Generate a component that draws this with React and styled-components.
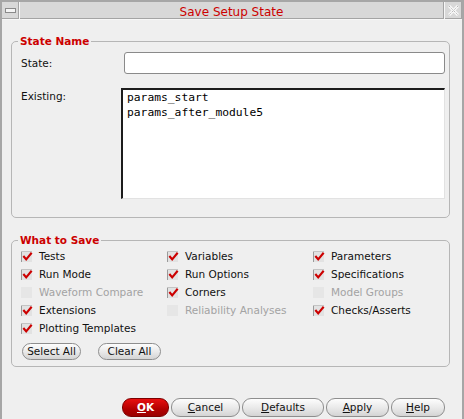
import React from 'react';
import styled, { createGlobalStyle } from 'styled-components';

const Global = createGlobalStyle`
  html, body { margin: 0; padding: 0; background: #efefef; }
  body { font-family: "DejaVu Sans", "Noto Sans", sans-serif; font-size: 10.5px; color: #111; }
  * { box-sizing: border-box; }
`;

const Window = styled.div`
  width: 464px;
  height: 419px;
  border: 2px solid #a6a6a6;
  border-bottom: none;
  background: #efefef;
  display: flex;
  flex-direction: column;
  overflow: hidden;
`;

const TitleBar = styled.div`
  display: flex;
  height: 18px;
  gap: 1px;
  background: #f7f7f7;
  flex: none;
`;

const TitleBox = styled.div`
  width: 17px;
  height: 17px;
  background: #d8d8d8;
  border-right: 1px solid #a4a4a4;
  border-bottom: 1px solid #a4a4a4;
  display: flex;
  align-items: center;
  justify-content: center;
  flex: none;
`;

const Title = styled.div`
  flex: 1;
  height: 17px;
  background: #d8d8d8;
  border-right: 1px solid #a4a4a4;
  border-bottom: 1px solid #a4a4a4;
  color: #cc0000;
  font-size: 12px;
  line-height: 16px;
  padding-top: 2px;
  text-align: center;
`;

const Content = styled.div`
  flex: 1;
  display: flex;
  flex-direction: column;
  padding: 15px 12px 2px 9px;
`;

const Frame = styled.fieldset`
  margin: ${p => p.$mt || 0}px 0 0 0;
  border: 1px solid #b6b6b6;
  border-radius: 5px;
  padding: ${p => p.$pt || 0}px 4px ${p => p.$pb || 0}px 9px;
  min-width: 0;
`;

const Legend = styled.legend`
  color: #cc0000;
  font-weight: bold;
  font-size: 10.5px;
  line-height: 13px;
  padding: 0 2px;
  margin-left: -3px;
`;

const FieldRow = styled.div`
  display: grid;
  grid-template-columns: 100px 1fr;
  align-items: ${p => p.$top ? 'start' : 'center'};
  margin-top: ${p => p.$mt || 0}px;
`;

const Label = styled.div`
  line-height: 15px;
  padding-top: ${p => p.$pt || 0}px;
`;

const TextInput = styled.input`
  margin-left: 3px;
  height: 22px;
  border: 1px solid #8a8a8a;
  border-radius: 3px;
  background: #fff;
  outline: none;
  font: inherit;
  padding: 0 4px;
`;

const List = styled.div`
  height: 111px;
  background: #fff;
  border-top: 2px solid #1c1c1c;
  border-left: 2px solid #1c1c1c;
  border-right: 1px solid #e2e2e2;
  border-bottom: 1px solid #e2e2e2;
  padding: 0 4px;
  font-family: "DejaVu Sans Mono", "Liberation Mono", monospace;
  font-size: 11.3px;
  line-height: 15px;
  color: #000;
`;

const ListItem = styled.div`
  white-space: nowrap;
`;

const CheckGrid = styled.div`
  display: grid;
  grid-template-columns: 146px 146px 1fr;
  grid-auto-rows: 18px;
`;

const CheckItem = styled.div`
  display: flex;
  align-items: center;
  gap: 6px;
  color: ${p => p.$disabled ? '#a3a3a3' : '#111'};
  white-space: nowrap;
`;

const SmallButtons = styled.div`
  display: flex;
  gap: 17px;
  margin-top: 6px;
  padding-left: 1px;
`;

const PillButton = styled.button`
  width: ${p => p.$w}px;
  height: ${p => p.$h || 17}px;
  border: 1px solid ${p => p.$primary ? '#7c0000' : '#8e8e8e'};
  border-radius: 9px;
  background: ${p => p.$primary
    ? 'linear-gradient(#e81010, #b20000 60%, #9a0000)'
    : 'linear-gradient(#fdfdfd, #e8e8e8 55%, #d4d4d4)'};
  color: ${p => p.$primary ? '#fff' : '#111'};
  font-family: "DejaVu Sans", sans-serif;
  font-size: 10.5px;
  font-weight: ${p => p.$primary ? 'bold' : 'normal'};
  padding: 0;
  line-height: 1;
  display: flex;
  align-items: center;
  justify-content: center;
  cursor: default;
`;

const ButtonBar = styled.div`
  margin-top: auto;
  display: flex;
  justify-content: flex-end;
  gap: 2px;
  padding-right: 5px;
`;

const MinIcon = () => (
  <svg width="11" height="5" viewBox="0 0 11 5">
    <rect x="0.5" y="0.5" width="10" height="4" fill="#f4f4f4" stroke="#8a8a8a" />
  </svg>
);

const CloseIcon = () => (
  <svg width="11" height="11" viewBox="0 0 11 11">
    <path d="M1 1 L10 10 M10 1 L1 10" stroke="#f8f8f8" strokeWidth="3" />
    <path d="M1 1 L10 10 M10 1 L1 10" stroke="#b4b4b4" strokeWidth="1" strokeDasharray="1.4 1" />
  </svg>
);

const CheckBox = ({ checked, disabled }) => (
  <svg width="12" height="11" viewBox="0 0 12 11" style={{ flex: 'none' }}>
    <rect x="0" y="0" width="11" height="11" fill={disabled ? '#e6e6e6' : '#e2e2e2'} />
    {!disabled && <rect x="0" y="0" width="1" height="11" fill="#9a9a9a" />}
    {!disabled && <rect x="0" y="0" width="11" height="1" fill="#c4c4c4" />}
    {checked && (
      <path d="M3 5.8 L5.2 8.4 L10 2.6" fill="none" stroke="#cc0000" strokeWidth="2.1" strokeLinecap="square" />
    )}
  </svg>
);

const Check = ({ label, checked, disabled }) => (
  <CheckItem $disabled={disabled}>
    <CheckBox checked={checked} disabled={disabled} />
    <span>{label}</span>
  </CheckItem>
);

const items = [
  ['Tests', true, false], ['Variables', true, false], ['Parameters', true, false],
  ['Run Mode', true, false], ['Run Options', true, false], ['Specifications', true, false],
  ['Waveform Compare', false, true], ['Corners', true, false], ['Model Groups', false, true],
  ['Extensions', true, false], ['Reliability Analyses', false, true], ['Checks/Asserts', true, false],
  ['Plotting Templates', true, false],
];

export default function App() {
  return (
    <>
      <Global />
      <Window>
        <TitleBar>
          <TitleBox><MinIcon /></TitleBox>
          <Title>Save Setup State</Title>
          <TitleBox><CloseIcon /></TitleBox>
        </TitleBar>
        <Content>
          <Frame $pt={4} $pb={18}>
            <Legend>State Name</Legend>
            <FieldRow>
              <Label>State:</Label>
              <TextInput type="text" defaultValue="" />
            </FieldRow>
            <FieldRow $top $mt={14}>
              <Label $pt={1}>Existing:</Label>
              <List>
                <ListItem>params_start</ListItem>
                <ListItem>params_after_module5</ListItem>
              </List>
            </FieldRow>
          </Frame>
          <Frame $mt={16} $pb={6}>
            <Legend>What to Save</Legend>
            <CheckGrid>
              {items.map(([l, c, d]) => (
                <Check key={l} label={l} checked={c} disabled={d} />
              ))}
            </CheckGrid>
            <SmallButtons>
              <PillButton $w={59}>Select All</PillButton>
              <PillButton $w={63}>Clear All</PillButton>
            </SmallButtons>
          </Frame>
          <ButtonBar>
            <PillButton $primary $w={47} $h={19}><u>O</u>K</PillButton>
            <PillButton $w={69} $h={19}><u>C</u>ancel</PillButton>
            <PillButton $w={82} $h={19}><u>D</u>efaults</PillButton>
            <PillButton $w={63} $h={19}><u>A</u>pply</PillButton>
            <PillButton $w={54} $h={19}><u>H</u>elp</PillButton>
          </ButtonBar>
        </Content>
      </Window>
    </>
  );
}
